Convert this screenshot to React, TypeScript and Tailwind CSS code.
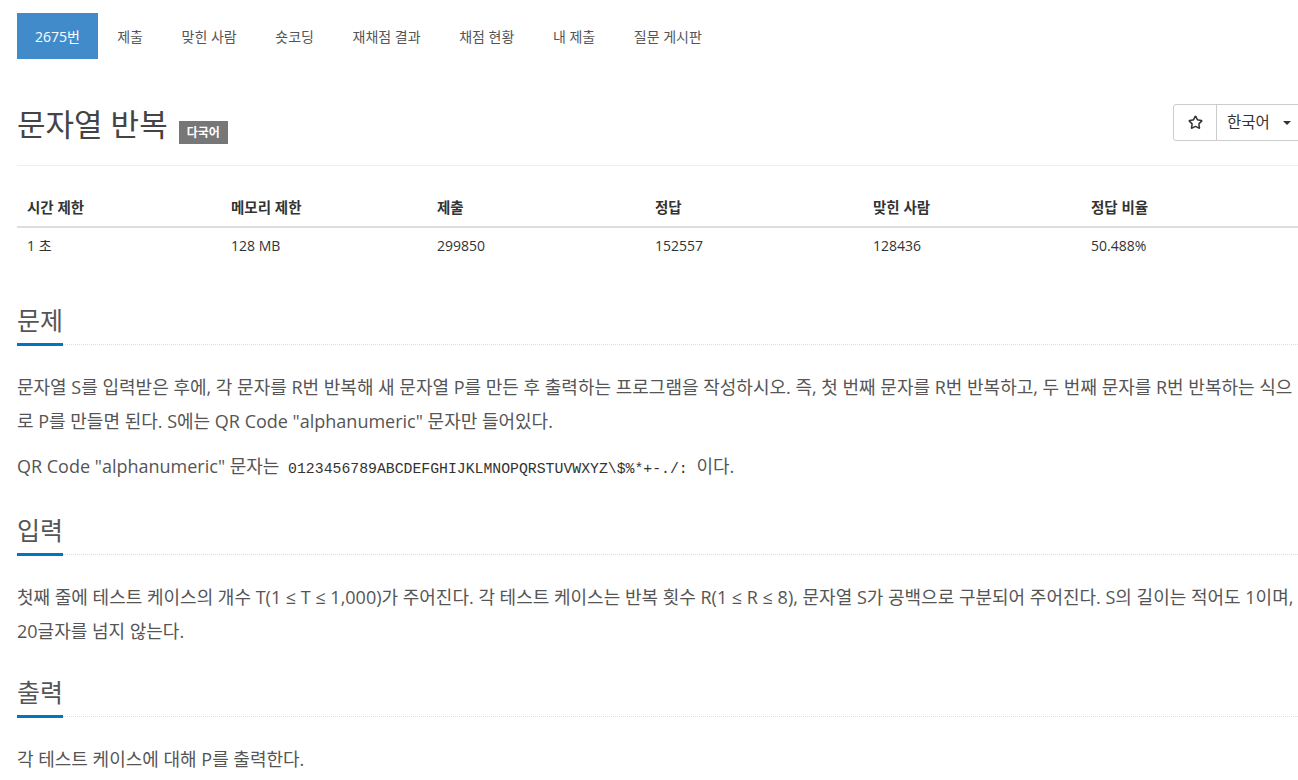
import { Star } from 'lucide-react'

const font = { fontFamily: '"Open Sans", "Noto Sans CJK KR", sans-serif' }

const tabs = ['제출', '맞힌 사람', '숏코딩', '재채점 결과', '채점 현황', '내 제출', '질문 게시판']

const stats = [
  ['시간 제한', '1 초'],
  ['메모리 제한', '128 MB'],
  ['제출', '299850'],
  ['정답', '152557'],
  ['맞힌 사람', '128436'],
  ['정답 비율', '50.488%'],
]

const SectionTitle = ({ title, first }: { title: string; first?: boolean }) => (
  <div className={`flex items-end ${first ? 'mt-[40px]' : 'mt-[28px]'}`}>
    <h2 className="border-b-[3px] border-[#0076c0] pb-[7px] text-[25px] leading-[32px] font-normal text-[#555]">{title}</h2>
    <div className="mb-[1px] flex-1 border-b border-dotted border-[#dddddd]" />
  </div>
)

export default function App() {
  return (
    <div className="min-h-screen bg-white pl-[17px] text-[#333]" style={font}>
      <nav className="flex pt-[13px] text-[14px]">
        <a className="flex h-[46px] items-center bg-[#428bca] px-[18px] text-white">2675번</a>
        {tabs.map((tab) => (
          <a className="flex h-[46px] items-center px-[19.3px] text-[#555]" key={tab}>
            {tab}
          </a>
        ))}
      </nav>

      <div className="mt-[45px] flex items-start justify-between border-b border-[#eeeeee] pb-[21px]">
        <div className="flex items-end">
          <h1 className="text-[31px] leading-[40px] font-normal text-[#444]">문자열 반복</h1>
          <span className="mb-0 ml-[11px] flex h-[23px] items-center bg-[#777] px-[8px] text-[12px] font-bold text-white">다국어</span>
        </div>
        <div className="flex h-[37px] text-[15.5px] text-[#333]">
          <button className="flex w-[44px] items-center justify-center rounded-l-[3px] border border-[#cccccc]" type="button">
            <Star className="h-[15px] w-[15px]" strokeWidth={2.4} />
          </button>
          <button className="-ml-px flex w-[82px] items-center gap-[13px] border border-r-0 border-[#cccccc] pl-[10px]" type="button">
            한국어
            <span className="h-0 w-0 border-x-[4px] border-t-[4px] border-x-transparent border-t-[#333]" />
          </button>
        </div>
      </div>

      <div className="mt-[24px] text-[14px]">
        <div className="grid grid-cols-[204px_206px_218px_218px_218px_1fr] border-b-2 border-[#dddddd] text-[14.5px] font-bold">
          {stats.map(([head]) => (
            <div className="px-[10px] py-[8px] leading-[20px]" key={head}>
              {head}
            </div>
          ))}
        </div>
        <div className="grid grid-cols-[204px_206px_218px_218px_218px_1fr]">
          {stats.map(([head, value]) => (
            <div className="px-[10px] py-[8px] leading-[20px]" key={head}>
              {value}
            </div>
          ))}
        </div>
      </div>

      <SectionTitle title="문제" first />
      <div className="mt-[24px] text-[18px] leading-[34px] text-[#555]">
        <p>
          문자열 S를 입력받은 후에, 각 문자를 R번 반복해 새 문자열 P를 만든 후 출력하는 프로그램을 작성하시오. 즉, 첫 번째 문자를 R번 반복하고, 두 번째 문자를 R번 반복하는 식으로 P를 만들면 된다. S에는 QR Code "alphanumeric" 문자만 들어있다.
        </p>
        <p className="mt-[11px]">
          QR Code "alphanumeric" 문자는{' '}
          <code className="px-[4px] text-[14.8px] text-[#333]" style={{ fontFamily: '"Liberation Mono", monospace' }}>
            0123456789ABCDEFGHIJKLMNOPQRSTUVWXYZ\$%*+-./:
          </code>{' '}
          이다.
        </p>
      </div>

      <SectionTitle title="입력" />
      <div className="mt-[24px] text-[18px] leading-[34px] text-[#555]">
        <p>
          첫째 줄에 테스트 케이스의 개수 T(1 ≤ T ≤ 1,000)가 주어진다. 각 테스트 케이스는 반복 횟수 R(1 ≤ R ≤ 8), 문자열 S가 공백으로 구분되어 주어진다. S의 길이는 적어도 1이며, 20글자를 넘지 않는다.
        </p>
      </div>

      <SectionTitle title="출력" />
      <div className="mt-[24px] text-[18px] leading-[34px] text-[#555]">
        <p>각 테스트 케이스에 대해 P를 출력한다.</p>
      </div>
    </div>
  )
}
